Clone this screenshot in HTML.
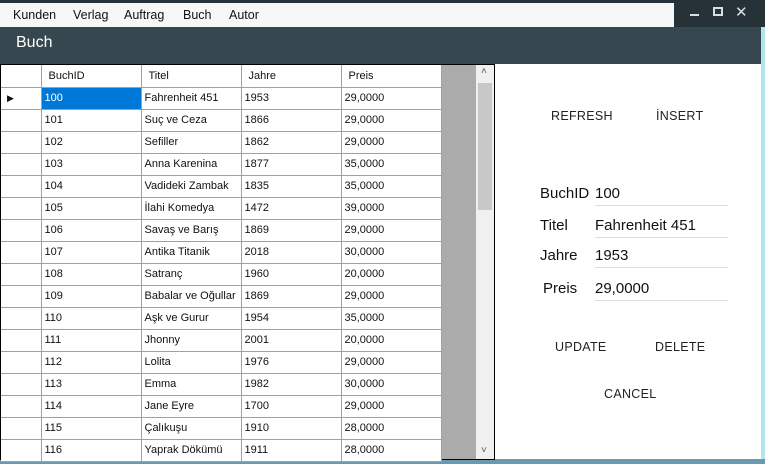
<!DOCTYPE html>
<html><head><style>
*{margin:0;padding:0;box-sizing:border-box}
body{width:765px;height:464px;overflow:hidden;background:#aee6ea;position:relative;font-family:"Liberation Sans",sans-serif}
.a{position:absolute}
.menu span{position:absolute;top:5px;font-size:12.5px;color:#111}
table{border-collapse:collapse;position:absolute;left:1px;top:65px;font-size:11px;table-layout:fixed;width:440px}
td{height:22px;border-right:1px solid #a0a0a0;border-bottom:1px solid #a0a0a0;padding:0 0 0 3px;color:#111;background:#fff;white-space:nowrap;overflow:hidden}
.btn{position:absolute;font-size:12.5px;letter-spacing:.3px;color:#222}
.lbl{position:absolute;font-size:15px;color:#111}
.ln{position:absolute;height:1px;background:#ddd;left:595px;width:133px}
</style></head><body>
<div class="a" style="left:0;top:0;width:765px;height:27px;background:#263238"></div>
<div class="a menu" style="left:0;top:3px;width:674px;height:24px;background:#f7f7f7">
<span style="left:13px">Kunden</span><span style="left:73px">Verlag</span><span style="left:124px">Auftrag</span><span style="left:183px">Buch</span><span style="left:229px">Autor</span></div>
<div class="a" style="left:690px;top:14px;width:9px;height:2px;background:#ddd"></div>
<div class="a" style="left:713px;top:7px;width:10px;height:9px;border:2px solid #ddd"></div>
<div class="a" style="left:735px;top:3px;color:#ddd;font-size:15px">✕</div>
<div class="a" style="left:0;top:27px;width:761px;height:37px;background:#37474f"></div>
<div class="a" style="left:16px;top:34px;color:#fff;font-size:16px">Buch</div>
<div class="a" style="left:0;top:64px;width:761px;height:395px;background:#fff"></div>
<div class="a" style="left:0;top:459px;width:765px;height:5px;background:#6a9ab0"></div>
<div class="a" style="left:0;top:64px;width:495px;height:396px;border:1px solid #000;background:#ababab;overflow:hidden">
<div class="a" style="left:475px;top:0;width:18px;height:396px;background:#f0f0f0"></div>
<div class="a" style="left:477px;top:18px;width:14px;height:127px;background:#c8c8c8"></div>
<div class="a" style="left:480px;top:1px;font-size:10px;color:#555">˄</div>
<div class="a" style="left:480px;top:380px;font-size:10px;color:#555">˅</div>
</div>
<table>
<colgroup><col style="width:40px"><col style="width:100px"><col style="width:100px"><col style="width:100px"><col style="width:100px"></colgroup>
<tr><td></td><td style="padding-left:7px">BuchID</td><td style="padding-left:7px">Titel</td><td style="padding-left:7px">Jahre</td><td style="padding-left:7px">Preis</td></tr>
<tr><td style="font-size:9px;padding-left:6px">▶</td><td style="background:#0078d7;color:#fff">100</td><td>Fahrenheit 451</td><td>1953</td><td>29,0000</td></tr>
<tr><td></td><td>101</td><td>Suç ve Ceza</td><td>1866</td><td>29,0000</td></tr>
<tr><td></td><td>102</td><td>Sefiller</td><td>1862</td><td>29,0000</td></tr>
<tr><td></td><td>103</td><td>Anna Karenina</td><td>1877</td><td>35,0000</td></tr>
<tr><td></td><td>104</td><td>Vadideki Zambak</td><td>1835</td><td>35,0000</td></tr>
<tr><td></td><td>105</td><td>İlahi Komedya</td><td>1472</td><td>39,0000</td></tr>
<tr><td></td><td>106</td><td>Savaş ve Barış</td><td>1869</td><td>29,0000</td></tr>
<tr><td></td><td>107</td><td>Antika Titanik</td><td>2018</td><td>30,0000</td></tr>
<tr><td></td><td>108</td><td>Satranç</td><td>1960</td><td>20,0000</td></tr>
<tr><td></td><td>109</td><td>Babalar ve Oğullar</td><td>1869</td><td>29,0000</td></tr>
<tr><td></td><td>110</td><td>Aşk ve Gurur</td><td>1954</td><td>35,0000</td></tr>
<tr><td></td><td>111</td><td>Jhonny</td><td>2001</td><td>20,0000</td></tr>
<tr><td></td><td>112</td><td>Lolita</td><td>1976</td><td>29,0000</td></tr>
<tr><td></td><td>113</td><td>Emma</td><td>1982</td><td>30,0000</td></tr>
<tr><td></td><td>114</td><td>Jane Eyre</td><td>1700</td><td>29,0000</td></tr>
<tr><td></td><td>115</td><td>Çalıkuşu</td><td>1910</td><td>28,0000</td></tr>
<tr><td></td><td>116</td><td>Yaprak Dökümü</td><td>1911</td><td>28,0000</td></tr>
</table>
<div class="btn" style="left:551px;top:109px">REFRESH</div>
<div class="btn" style="left:656px;top:109px">İNSERT</div>
<div class="lbl" style="left:540px;top:185px">BuchID</div><div class="lbl" style="left:595px;top:185px">100</div><div class="ln" style="top:205px"></div>
<div class="lbl" style="left:540px;top:217px">Titel</div><div class="lbl" style="left:595px;top:217px">Fahrenheit 451</div><div class="ln" style="top:237px"></div>
<div class="lbl" style="left:540px;top:247px">Jahre</div><div class="lbl" style="left:595px;top:247px">1953</div><div class="ln" style="top:267px"></div>
<div class="lbl" style="left:543px;top:280px">Preis</div><div class="lbl" style="left:595px;top:280px">29,0000</div><div class="ln" style="top:300px"></div>
<div class="btn" style="left:555px;top:340px">UPDATE</div>
<div class="btn" style="left:655px;top:340px">DELETE</div>
<div class="btn" style="left:604px;top:387px">CANCEL</div>
</body></html>
